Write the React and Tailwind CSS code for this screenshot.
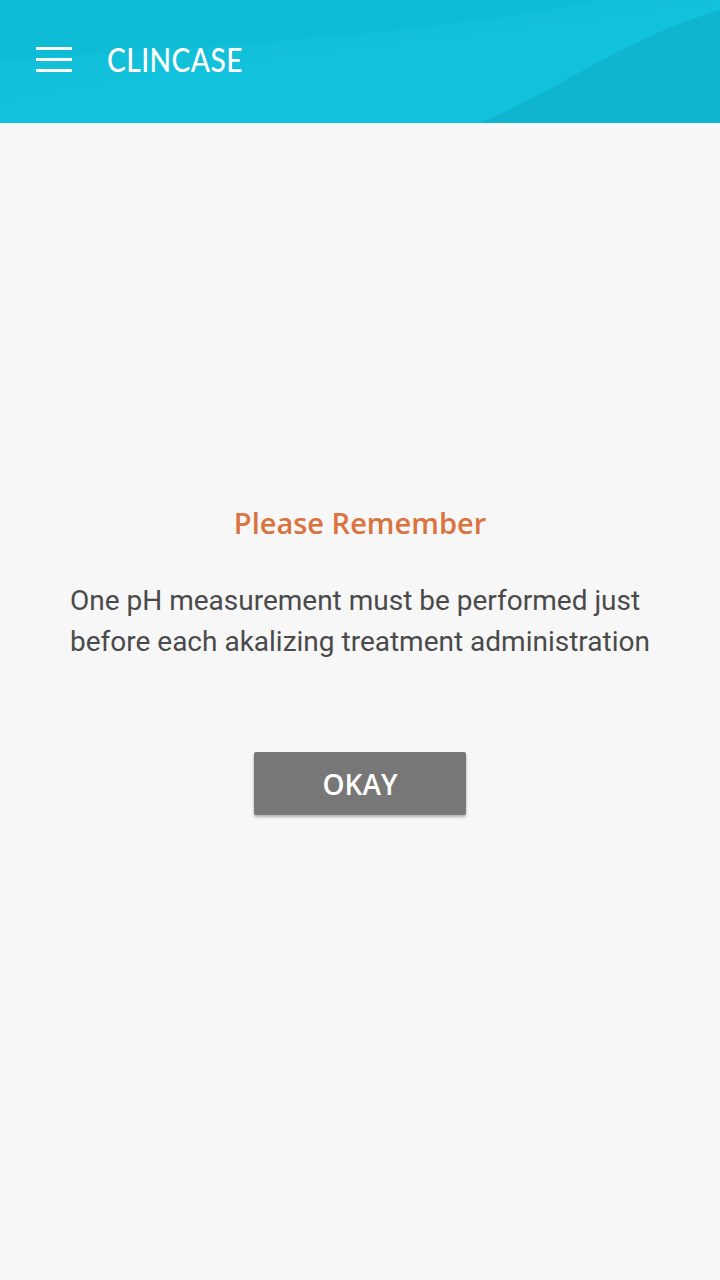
function MenuIcon() {
  return (
    <span className="flex w-9 flex-col gap-2">
      <span className="h-[3px] w-9 bg-white" />
      <span className="h-[3px] w-9 bg-white" />
      <span className="h-[3px] w-9 bg-white" />
    </span>
  );
}

function Header() {
  return (
    <header className="relative h-[123px] overflow-hidden bg-[#12c0da]">
      <svg className="absolute inset-0 h-full w-full" viewBox="0 0 720 123" preserveAspectRatio="none">
        <path d="M0 0 H600 C520 20 300 45 0 60 Z" fill="#0db9d4" opacity="0.6" />
        <path d="M0 100 C200 60 450 40 720 0 V123 H0 Z" fill="#14c4dd" opacity="0.35" />
        <path d="M480 123 C560 90 620 40 720 10 V123 Z" fill="#0eaeca" opacity="0.7" />
      </svg>
      <div className="relative flex h-full items-center gap-[35px] px-9 pb-1">
        <MenuIcon />
        <span className="inline-block origin-left scale-x-[0.88] font-['Lato',sans-serif] text-[32px] font-medium tracking-[0.5px] text-white">
          CLINCASE
        </span>
      </div>
    </header>
  );
}

export default function App() {
  return (
    <div className="min-h-[1280px] bg-[#f7f7f7]">
      <Header />
      <main className="flex flex-col items-center pt-[380px]">
        <h2 className="font-['Open_Sans',sans-serif] text-[29px] font-semibold leading-[40px] text-[#d9733f]">
          Please Remember
        </h2>
        <p className="mt-[37px] w-full pl-[70px] pr-[62px] text-left font-['Roboto',sans-serif] text-[28px] leading-[41px] text-[#4a4a4a]">
          One pH measurement must be performed just before each akalizing treatment administration
        </p>
        <button className="mt-[90px] h-[63px] w-[212px] rounded-[2px] bg-[#777777] font-['Open_Sans',sans-serif] text-[28px] font-semibold text-white shadow-[0_2px_3px_rgba(0,0,0,0.3)]">
          OKAY
        </button>
      </main>
    </div>
  );
}
